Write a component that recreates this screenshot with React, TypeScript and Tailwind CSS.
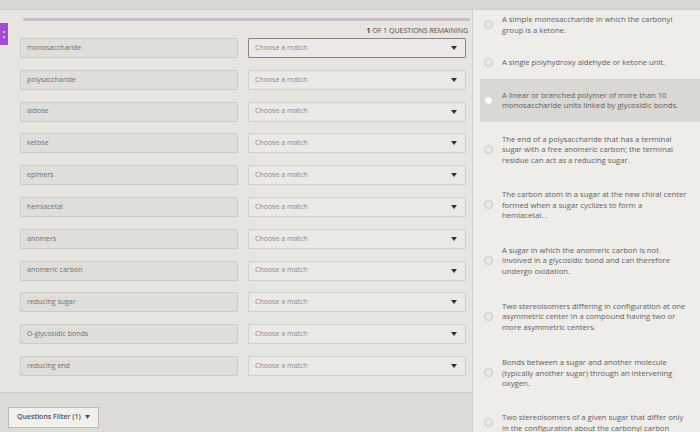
import React from "react";

const terms = [
  "monosaccharide",
  "polysaccharide",
  "aldose",
  "ketose",
  "epimers",
  "hemiacetal",
  "anomers",
  "anomeric carbon",
  "reducing sugar",
  "O-glycosidic bonds",
  "reducing end",
];

const answers: string[][] = [
  ["A simple monosaccharide in which the carbonyl", "group is a ketone."],
  ["A single polyhydroxy aldehyde or ketone unit."],
  ["A linear or branched polymer of more than 10", "monosaccharide units linked by glycosidic bonds."],
  [
    "The end of a polysaccharide that has a terminal",
    "sugar with a free anomeric carbon; the terminal",
    "residue can act as a reducing sugar.",
  ],
  [
    "The carbon atom in a sugar at the new chiral center",
    "formed when a sugar cyclizes to form a",
    "hemiacetal. .",
  ],
  [
    "A sugar in which the anomeric carbon is not",
    "involved in a glycosidic bond and can therefore",
    "undergo oxidation.",
  ],
  [
    "Two stereoisomers differing in configuration at one",
    "asymmetric center in a compound having two or",
    "more asymmetric centers.",
  ],
  [
    "Bonds between a sugar and another molecule",
    "(typically another sugar) through an intervening",
    "oxygen.",
  ],
  [
    "Two stereoisomers of a given sugar that differ only",
    "in the configuration about the carbonyl carbon",
  ],
];

// padding per choice, a touch wider lower down like the photo
const pads = [
  "pt-[4px] pb-[11px]",
  "pt-[11px] pb-[11px]",
  "pt-[11px] pb-[11px]",
  "pt-[12px] pb-[12px]",
  "pt-[12px] pb-[12px]",
  "pt-[12px] pb-[12px]",
  "pt-[12.5px] pb-[12.5px]",
  "pt-[12.5px] pb-[12.5px]",
  "pt-[11px] pb-[4px]",
];

const Caret: React.FC = () => (
  <svg width="6" height="4" viewBox="0 0 6 4" className="shrink-0">
    <path d="M0 0 L6 0 L3 4 Z" fill="#2f2f2f" />
  </svg>
);

const App: React.FC = () => {
  return (
    <div
      className="relative w-[700px] h-[432px] overflow-hidden bg-[#e7e5e0] flex flex-col"
      style={{ fontFamily: '"Open Sans", "Liberation Sans", sans-serif' }}
    >
      {/* top strip */}
      <div className="h-[10px] shrink-0 bg-[#d9d7d3] border-b border-[#d0cec9]" />

      <div className="flex flex-1 min-h-0">
        {/* left: terms + dropdowns */}
        <div className="w-[472px] shrink-0 flex flex-col">
          <div className="ml-[23px] mt-[8px] w-[447px] h-[3px] bg-[#cbbcd3]" />
          <div className="mt-[5px] h-[10px] pr-[4px] text-right text-[7px] leading-[10px] text-[#4a4a4a]">
            <span className="font-bold">1</span> OF 1 QUESTIONS REMAINING
          </div>

          <div className="mt-[2px] pl-[20px] flex flex-col gap-[11.8px]">
            {terms.map((t, i) => (
              <div key={t} className="flex gap-[10px] h-[20px]">
                <div className="w-[218px] h-full flex items-center px-[6px] bg-[#e0ded9] border border-[#cdcbc6] rounded-[1px] text-[7px] text-[#6f6f6f]">
                  {t}
                </div>
                <div
                  className={
                    i === 0
                      ? "w-[218px] h-full flex items-center justify-between px-[6px] pr-[8px] bg-[#ebe9e5] border-[1.5px] border-[#8b7f90] rounded-[1px]"
                      : "w-[218px] h-full flex items-center justify-between px-[6px] pr-[8px] bg-[#ebe9e5] border border-[#d3d1cc] rounded-[1px]"
                  }
                >
                  <span className="text-[7px] text-[#8a8a8a]">Choose a match</span>
                  <Caret />
                </div>
              </div>
            ))}
          </div>

          <div className="mt-[16px] flex-1 border-t border-[#d0cec9] bg-[#dedcd7] pt-[8px] pl-[8px]">
            <div className="inline-flex items-center gap-[4px] h-[21px] px-[8px] bg-[#f1f0ec] border border-[#bcbab5] text-[7px] font-semibold text-[#4e4e4e]">
              Questions Filter (1)
              <svg width="5" height="4" viewBox="0 0 5 4">
                <path d="M0 0 L5 0 L2.5 4 Z" fill="#4e4e4e" />
              </svg>
            </div>
          </div>
        </div>

        {/* right: answer choices */}
        <div className="flex-1 bg-[#eeede9] border-l border-[#d2d0cb] pl-[7px] flex flex-col">
          {answers.map((lines, i) => (
            <div
              key={i}
              className={
                (i === 2 ? "bg-[#dad8d3] " : "") +
                pads[i] +
                " flex items-center gap-[9px] pl-[4px] shrink-0"
              }
            >
              <span
                className={
                  i === 2
                    ? "w-[9px] h-[9px] rounded-full bg-white border border-[#d6d4cf] shrink-0"
                    : "w-[9px] h-[9px] rounded-full bg-[#e9e8e4] border border-[#c9c7c2] shrink-0"
                }
              />
              <div className="text-[7.7px] leading-[10.5px] text-[#5f5f5f]">
                {lines.map((l) => (
                  <div key={l} className="whitespace-nowrap">
                    {l}
                  </div>
                ))}
              </div>
            </div>
          ))}
        </div>
      </div>

      {/* purple side tab */}
      <div className="absolute left-0 top-[23px] w-[8px] h-[22px] bg-[#a14fce] flex flex-col items-center justify-center gap-[3px]">
        <span className="w-[2px] h-[2px] bg-white/80 rounded-full" />
        <span className="w-[2px] h-[2px] bg-white/80 rounded-full" />
      </div>
    </div>
  );
};

export default App;
